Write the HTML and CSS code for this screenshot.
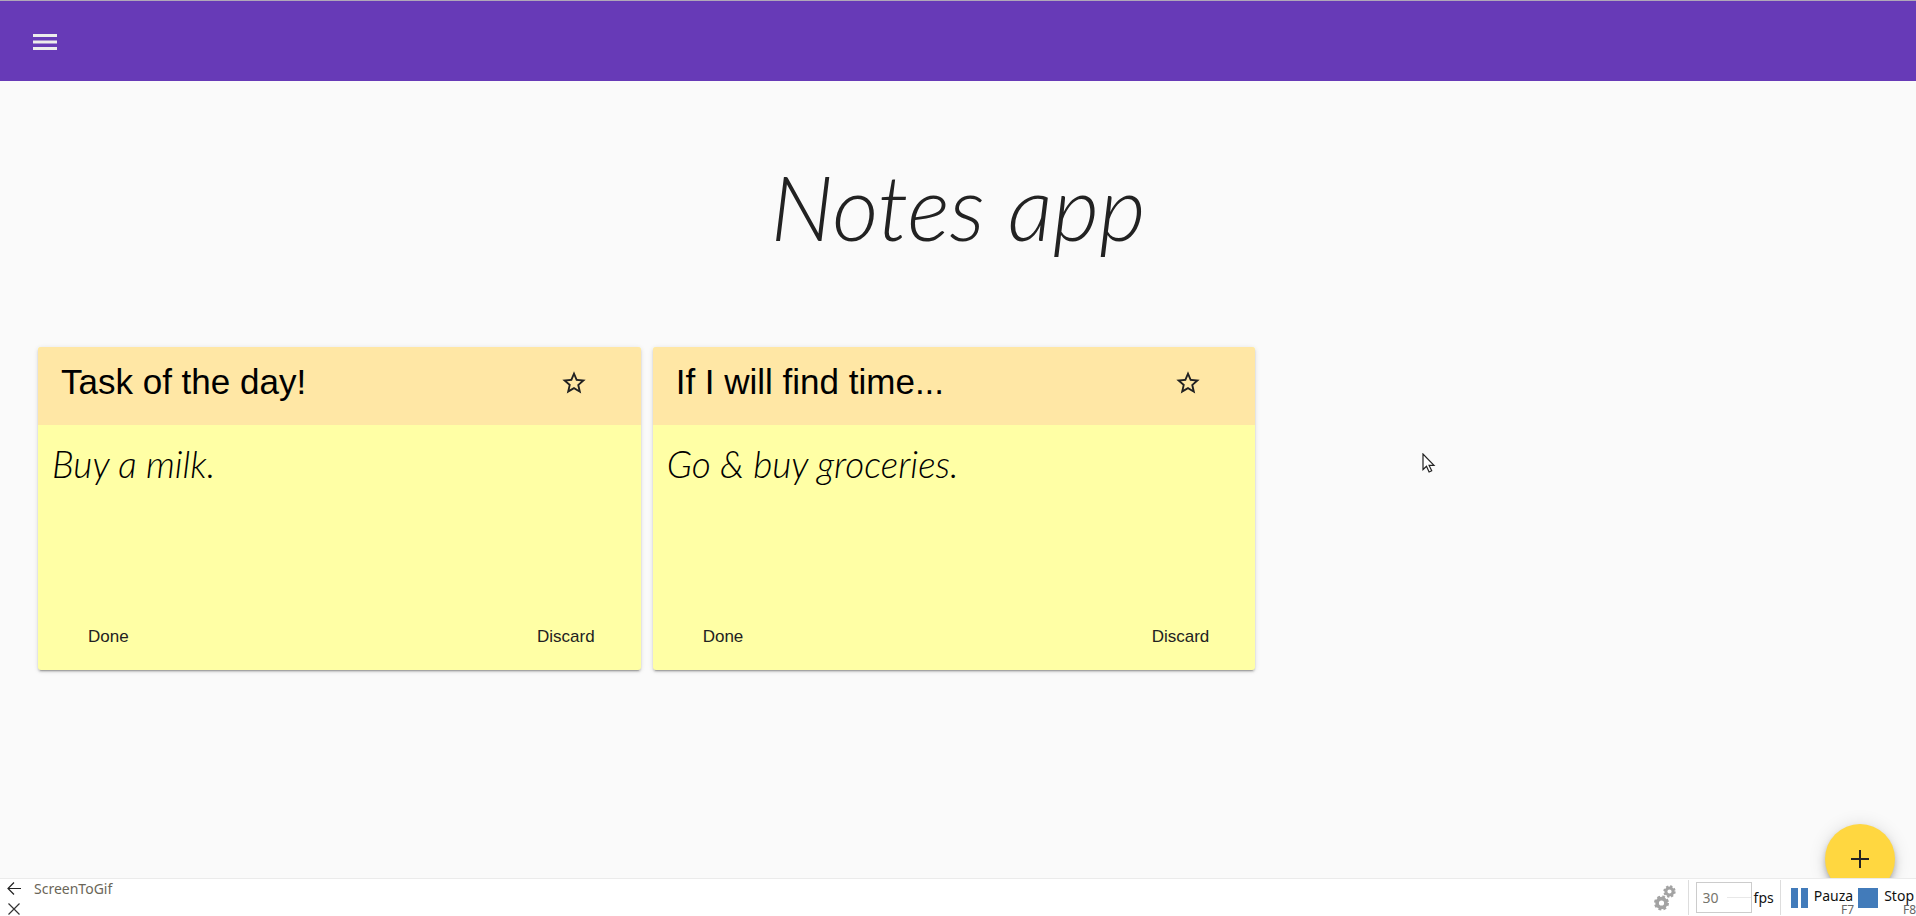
FILE: index.html
```html
<!DOCTYPE html>
<html lang="en">
<head>
<meta charset="utf-8">
<meta name="viewport" content="width=device-width, initial-scale=1">
<title>Notes app</title>
<link rel="stylesheet" href="styles.css">
</head>
<body>
<header class="toolbar">
  <button class="icon-button" aria-label="Menu">
    <svg width="24" height="16" viewBox="0 0 24 16" fill="#ececec"><path d="M0 0h24v3H0zM0 6.500h24v3H0zM0 13h24v3H0z"/></svg>
  </button>
</header>
<main class="page">
  <h1 class="page-title">Notes app</h1>
  <section class="notes">
    <article class="note">
      <div class="note-header">
        <h2 class="note-title">Task of the day!</h2>
        <button class="icon-button" aria-label="Star this note">
          <svg width="28" height="28" viewBox="0 0 24 24" fill="#222"><path d="M22 9.240l-7.190-.620L12 2 9.190 8.630 2 9.240l5.460 4.730L5.820 21 12 17.270 18.180 21l-1.630-7.030L22 9.240zM12 15.400l-3.760 2.270 1-4.280-3.320-2.880 4.380-.380L12 6.100l1.710 4.040 4.380.380-3.320 2.880 1 4.280L12 15.400z"/></svg>
        </button>
      </div>
      <p class="note-text">Buy a milk.</p>
      <div class="note-actions">
        <button class="text-button">Done</button>
        <button class="text-button">Discard</button>
      </div>
    </article>
    <article class="note">
      <div class="note-header">
        <h2 class="note-title">If I will find time...</h2>
        <button class="icon-button" aria-label="Star this note">
          <svg width="28" height="28" viewBox="0 0 24 24" fill="#222"><path d="M22 9.240l-7.190-.620L12 2 9.190 8.630 2 9.240l5.460 4.730L5.820 21 12 17.270 18.180 21l-1.630-7.030L22 9.240zM12 15.400l-3.760 2.270 1-4.280-3.320-2.880 4.380-.380L12 6.100l1.710 4.040 4.380.380-3.320 2.880 1 4.280L12 15.400z"/></svg>
        </button>
      </div>
      <p class="note-text">Go &amp; buy groceries.</p>
      <div class="note-actions">
        <button class="text-button">Done</button>
        <button class="text-button">Discard</button>
      </div>
    </article>
  </section>
  <svg class="pointer" width="14" height="21" viewBox="0 0 14 21"><path d="M1 1v15.500l3.500-3.300 2.600 5.800 2.600-1.200-2.600-5.400h4.900z" fill="#fff" stroke="#222" stroke-width="1.200"/></svg>
  <button class="fab" aria-label="Add note">
    <svg width="18" height="18" viewBox="0 0 18 18" fill="#222"><path d="M8 0h2v8h8v2h-8v8H8v-8H0V8h8z"/></svg>
  </button>
</main>
<footer class="recorder">
  <div class="window-controls">
    <div class="control-row">
      <button class="icon-button" aria-label="Back">
        <svg width="14" height="14" viewBox="0 0 14 14" fill="none" stroke="#222" stroke-width="1.200"><path d="M14 6.500H1M7 .500l-6 6 6 6"/></svg>
      </button>
      <span class="recorder-name">ScreenToGif</span>
    </div>
    <div class="control-row">
      <button class="icon-button" aria-label="Close">
        <svg width="14" height="14" viewBox="0 0 14 14" fill="none" stroke="#333" stroke-width="1.200"><path d="M1.500 1.500l11 11M12.500 1.500l-11 11"/></svg>
      </button>
    </div>
  </div>
  <div class="recorder-tools">
    <button class="icon-button settings" aria-label="Settings">
      <svg width="22" height="26" viewBox="0 0 22 26" fill="none" stroke="#a3a3a3">
        <circle cx="15.500" cy="6.500" r="3.600" stroke-width="3"/>
        <circle cx="15.500" cy="6.500" r="5.200" stroke-width="2" stroke-dasharray="2.240 1.844"/>
        <circle cx="7.500" cy="18" r="4.400" stroke-width="3.600"/>
        <circle cx="7.500" cy="18" r="6.400" stroke-width="2.200" stroke-dasharray="2.800 2.226"/>
      </svg>
    </button>
    <label class="fps"><input class="fps-input" type="text" value="30">fps</label>
    <button class="record-button">
      <svg width="17" height="20" viewBox="0 0 17 20" fill="#427bba"><path d="M0 0h7v20H0zM10 0h7v20h-7z"/></svg>
      <span class="record-label">Pauza</span><span class="shortcut">F7</span>
    </button>
    <button class="record-button stop">
      <svg width="20" height="20" viewBox="0 0 20 20" fill="#427bba"><path d="M0 0h20v20H0z"/></svg>
      <span class="record-label">Stop</span><span class="shortcut">F8</span>
    </button>
  </div>
</footer>
</body>
</html>
```
FILE: styles.css
```css
* { box-sizing: border-box; }

body {
  margin: 0;
  min-height: 100vh;
  display: flex;
  flex-direction: column;
  background: #fafafa;
  color: #222;
  font-family: "Liberation Sans", Arial, sans-serif;
}

h1, h2, p { margin: 0; font-weight: 400; }

button {
  padding: 0;
  border: 0;
  background: none;
  color: inherit;
  font: inherit;
  cursor: pointer;
}

.icon-button { display: flex; }

.toolbar {
  display: flex;
  align-items: center;
  height: 81px;
  padding: 2px 33px 0;
  border-top: 1px solid #b0a8b8;
  background: #673ab7;
}

.page {
  position: relative;
  flex: 1;
}

.page-title {
  padding: 44px 0 60px;
  font: italic 300 90px/162px Lato, sans-serif;
  text-align: center;
}

.notes {
  display: grid;
  grid-template-columns: repeat(3, 1fr);
  gap: 12px;
  padding: 0 46px 0 38px;
}

.note {
  display: flex;
  flex-direction: column;
  min-height: 323px;
  border-radius: 3px;
  overflow: hidden;
  background: #ffffa5;
  box-shadow: 0 3px 1px -2px rgba(0, 0, 0, .2), 0 2px 2px rgba(0, 0, 0, .14), 0 1px 5px rgba(0, 0, 0, .12);
}

.note-header {
  display: flex;
  justify-content: space-between;
  height: 78px;
  padding: 15px 53px 0 23px;
  background: #ffe7a5;
}

.note-header .icon-button { padding-top: 7px; align-self: flex-start; }

.note-title {
  color: #000;
  font-size: 35px;
  line-height: 40px;
}

.note-text {
  flex: 1;
  padding: 16px 14px;
  color: #000;
  font: italic 300 37px/46px Lato, sans-serif;
}

.note-actions {
  display: flex;
  justify-content: space-between;
  padding: 0 46px 22px 50px;
}

.text-button {
  font-size: 17px;
  line-height: 22px;
}

.pointer {
  position: absolute;
  top: 372px;
  left: 74.2%;
}

.fab {
  position: absolute;
  right: 21px;
  bottom: -16px;
  display: flex;
  align-items: center;
  justify-content: center;
  width: 70px;
  height: 70px;
  border-radius: 50%;
  background: #ffd740;
  box-shadow: 0 3px 5px -1px rgba(0, 0, 0, .2), 0 6px 10px rgba(0, 0, 0, .14), 0 1px 18px rgba(0, 0, 0, .12);
}

.recorder {
  position: relative;
  display: flex;
  justify-content: space-between;
  height: 38px;
  border-top: 1px solid #ebebeb;
  background: #fff;
  font: 14px/20px "Noto Sans", sans-serif;
}

.window-controls { padding-left: 7px; }

.control-row {
  display: flex;
  align-items: center;
  gap: 13px;
  height: 20px;
}

.recorder-name { color: #6b6658; }

.recorder-tools {
  display: flex;
  align-items: center;
  padding-right: 2px;
  color: #111;
}

.settings { padding-right: 12px; }

.fps {
  display: flex;
  align-items: center;
  gap: 2px;
  height: 35px;
  padding: 0 6px 0 7px;
  border: solid #ddd;
  border-width: 0 1px;
}

.fps-input {
  width: 56px;
  height: 31px;
  padding: 0 6px;
  border: 1px solid #ccc;
  background: linear-gradient(#e8e8e8, #e8e8e8) 100% 50% / 24px 1px no-repeat #fff;
  color: #77756c;
  font: inherit;
}

.record-button {
  position: relative;
  display: flex;
  align-items: center;
  gap: 6px;
  height: 37px;
  padding: 0 5px 0 10px;
}

.record-button.stop { padding: 0; }

.record-label { padding-bottom: 4px; }

.shortcut {
  position: absolute;
  right: 4px;
  bottom: 0;
  color: #666;
  font-size: 12px;
  line-height: 12px;
}

.stop .shortcut { right: -2px; }
```
